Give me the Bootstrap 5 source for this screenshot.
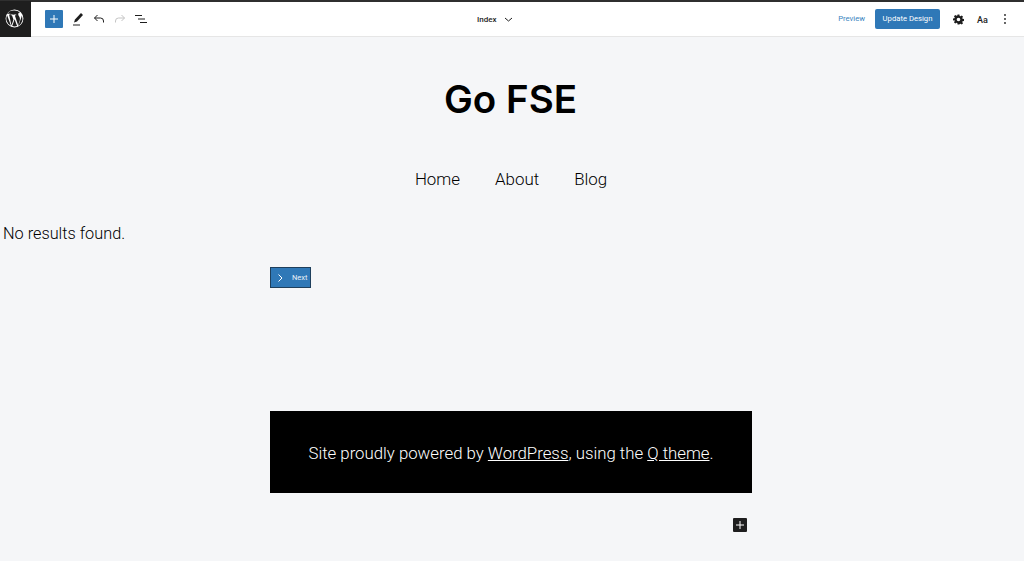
<!DOCTYPE html>
<html lang="en">

<head>
    <meta charset="UTF-8">
    <meta name="viewport" content="width=device-width, initial-scale=1.0">
    <title>Index</title>
    <link href="https://cdn.jsdelivr.net/npm/bootstrap@5.3.0/dist/css/bootstrap.min.css" rel="stylesheet">
    <style>
        html, body { height: 100%; }
        body { background: #f5f6f8; font-family: Roboto, "Liberation Sans", sans-serif; color: #000; overflow: hidden; }
        .edit-stripe { height: 2px; background: #2f2f2f; }
        .edit-bar { height: 35px; background: #fff; border-bottom: 1px solid #e6e6e6; }
        .wp-tile { width: 31px; height: 36px; margin-top: -1px; padding-right: 2px; background: #1e1e1e; }
        .add-tile { width: 18px; height: 18px; background: #2f78b7; border-radius: 1px; }
        .tool-row { gap: 9px; margin-left: 14px; }
        .tool-row svg { display: block; }
        .doc-name { position: absolute; left: 477px; top: 0; height: 35px; font-size: 8px; font-weight: 500; color: #1e1e1e; gap: 7px; }
        .preview-link { font-size: 7.7px; color: #3a84c0; text-decoration: none; }
        .save-btn { height: 20px; width: 65px; margin-left: 10px; padding: 0; font-size: 7.7px; line-height: 20px; color: #fff; background: #2f78b7; border: 0; border-radius: 2px; }
        .right-tools { gap: 13px; margin-left: 13px; margin-right: 17px; }
        .type-tile { font-size: 9px; font-weight: 500; line-height: 12px; padding-top: 2px; color: #1e1e1e; width: 13px; }
        .site-title { font-family: Inter, "Liberation Sans", sans-serif; font-size: 38.5px; font-weight: 600; line-height: 48px; margin: 38px 0 0; padding-right: 3px; }
        .site-menu { gap: 35px; margin-top: 44px; padding-right: 2px; font-size: 16.9px; font-weight: 300; line-height: 24px; }
        .no-results { font-size: 16.3px; font-weight: 300; line-height: 24px; margin: 31px 0 0 3px; }
        .page-wrap { width: 482px; margin-left: 270px; }
        .next-btn { width: 41px; height: 21px; margin-top: 21px; padding-left: 6px; gap: 9px; background: #2f78b7; border: 1px solid #1e3f5c; font-size: 7.5px; color: #e9f1f8; }
        .site-foot { height: 82px; margin-top: 123px; padding-top: 3px; background: #000; color: #fff; font-size: 16.8px; font-weight: 300; }
        .site-foot a { color: #fff; }
        .add-corner { position: absolute; left: 733px; top: 518px; width: 14px; height: 14px; background: #1e1e1e; border-radius: 1px; }
    </style>
</head>

<body>
<div class="edit-stripe"></div>
<header class="edit-bar d-flex align-items-center position-relative">
    <div class="wp-tile d-flex align-items-center justify-content-center flex-shrink-0">
        <svg width="19" height="19" viewBox="0 0 20 20" fill="#fff"><path d="M10 .6a9.400 9.400 0 1 0 0 18.800A9.400 9.400 0 0 0 10 .6zm0 .9a8.500 8.500 0 0 1 5.800 2.300c-1-.1-1.900.7-1.900 1.700 0 .9.500 1.600 1 2.400.4.700.8 1.500.8 2.800 0 .9-.3 1.900-.8 3.300l-1 3.300-3.500-10.500c.6 0 1.100-.1 1.100-.1.500-.1.500-.8 0-.8 0 0-1.600.1-2.600.1-1 0-2.500-.1-2.500-.1-.5 0-.6.800 0 .8 0 0 .5.100 1 .1l1.500 4.200-2.100 6.400L4.300 5.800c.6 0 1.100-.1 1.100-.1.500-.1.500-.8 0-.8 0 0-1.600.1-2.600.1h-.5A8.500 8.500 0 0 1 10 1.500zM2.200 6.500l4.100 11.200A8.500 8.500 0 0 1 2.200 6.500zm15.200.1A8.500 8.500 0 0 1 14 17.900l3-8.500c.5-1.400.7-2 .4-2.800zM10.100 10.700l2.600 7.100.1.100a8.500 8.500 0 0 1-5.200.1l2.500-7.300z"/></svg>
    </div>
    <div class="tool-row d-flex align-items-center">
        <div class="add-tile d-flex align-items-center justify-content-center">
            <svg width="10" height="10" viewBox="0 0 10 10" stroke="#fff" stroke-width="1"><path d="M5 1v8M1 5h8"/></svg>
        </div>
        <svg width="12" height="14" viewBox="0 0 12 14" fill="#1e1e1e"><path d="M9 1l2 2-6 6.500-3 1 1-3z"/><path d="M1 12.500h7v1H1z"/></svg>
        <svg width="12" height="12" viewBox="0 0 12 12" fill="none" stroke="#1e1e1e" stroke-width="1"><path d="M4.500 2L1.500 5l3 3M1.500 5H7.500a3 3 0 0 1 3 3v1.500"/></svg>
        <svg width="12" height="12" viewBox="0 0 12 12" fill="none" stroke="#c4c4c4" stroke-width="1"><path d="M7.500 2l3 3-3 3M10.500 5H4.500a3 3 0 0 0-3 3v1.500"/></svg>
        <svg width="12" height="12" viewBox="0 0 12 12" stroke="#1e1e1e" stroke-width="1"><path d="M0 2.500h7M3 6h7M5 9.500h7"/></svg>
    </div>
    <div class="doc-name d-flex align-items-center">
        <span>Index</span>
        <svg width="9" height="9" viewBox="0 0 9 9" fill="none" stroke="#1e1e1e" stroke-width="1"><path d="M1 3l3.500 3L8 3"/></svg>
    </div>
    <div class="d-flex align-items-center ms-auto">
        <a class="preview-link" href="#">Preview</a>
        <button class="save-btn" type="button">Update Design</button>
        <div class="right-tools d-flex align-items-center">
            <svg width="11" height="11" viewBox="0 0 24 24" fill="#1e1e1e" fill-rule="evenodd"><path d="M10 1h4l.6 3.100 1.900.8 2.600-1.800 2.800 2.800-1.800 2.600.8 1.900 3.100.6v4l-3.100.6-.8 1.900 1.800 2.600-2.800 2.800-2.600-1.800-1.900.8L14 23h-4l-.6-3.100-1.900-.8-2.600 1.800-2.800-2.800 1.800-2.600-.8-1.900L0 14v-4l3.100-.6.8-1.900-1.800-2.600 2.800-2.800 2.600 1.800 1.900-.8zM12 8a4 4 0 1 0 0 8 4 4 0 0 0 0-8z"/></svg>
            <span class="type-tile">Aa</span>
            <svg width="4" height="12" viewBox="0 0 4 12" fill="#1e1e1e"><circle cx="2" cy="2" r=".9"/><circle cx="2" cy="6" r=".9"/><circle cx="2" cy="10" r=".9"/></svg>
        </div>
    </div>
</header>

<main>
    <h1 class="site-title text-center">Go FSE</h1>
    <nav class="site-menu d-flex justify-content-center">
        <span>Home</span>
        <span>About</span>
        <span>Blog</span>
    </nav>
    <p class="no-results">No results found.</p>
    <div class="page-wrap">
        <div class="next-btn d-flex align-items-center">
            <svg width="6" height="8" viewBox="0 0 6 8" fill="none" stroke="#fff" stroke-width="1"><path d="M1.500 .5L5 4 1.500 7.500"/></svg>
            <span>Next</span>
        </div>
        <footer class="site-foot d-flex align-items-center justify-content-center">
            <span>Site proudly powered by <a href="#">WordPress</a>, using the <a href="#">Q theme</a>.</span>
        </footer>
    </div>
</main>
<div class="add-corner d-flex align-items-center justify-content-center">
    <svg width="10" height="10" viewBox="0 0 10 10" stroke="#fff" stroke-width="1"><path d="M5 1v8M1 5h8"/></svg>
</div>
<script src="https://cdn.jsdelivr.net/npm/bootstrap@5.3.0/dist/js/bootstrap.bundle.min.js"></script>
</body>

</html>
